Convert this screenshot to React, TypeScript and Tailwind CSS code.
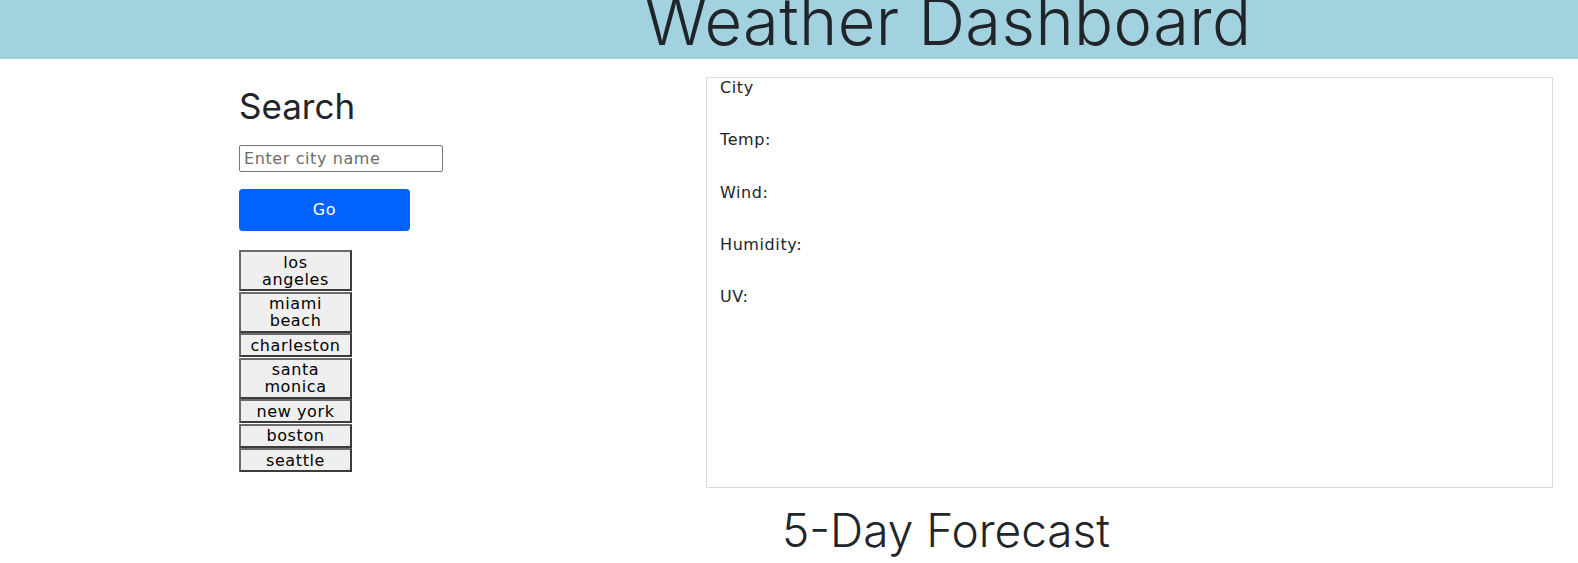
import React from 'react';

const cities = ['los angeles', 'miami beach', 'charleston', 'santa monica', 'new york', 'boston', 'seattle'];
const labels = ['City', 'Temp:', 'Wind:', 'Humidity:', 'UV:'];

export default function App() {
  return (
    <div className="min-h-screen w-full overflow-hidden bg-white text-[#212529] font-['DejaVu_Sans','Noto_Sans',sans-serif]">
      {/* header */}
      <header className="flex h-[59px] justify-center overflow-hidden bg-[#a2d2e0] pl-[318px]">
        <h1 className="-mt-[11px] whitespace-nowrap font-['Inter',sans-serif] text-[65px] font-light leading-none tracking-[0.4px]">
          Weather Dashboard
        </h1>
      </header>

      <main className="flex">
        {/* search column */}
        <section className="flex w-[706px] shrink-0 flex-col items-start pl-[239px] pt-[26px]">
          <h2 className="font-['Inter',sans-serif] text-[35px] font-normal leading-[1.2]">Search</h2>
          <input
            type="text"
            placeholder="Enter city name"
            className="mt-[18px] h-[27px] w-[204px] rounded-[2px] border border-[#767676] px-[4px] text-[16px] tracking-[0.6px] outline-none placeholder:text-[#6d6d6d]"
          />
          <button className="mt-[17px] h-[42px] w-[171px] rounded-[4px] bg-[#0062ff] text-[16px] tracking-[0.6px] text-white">
            Go
          </button>
          <ul className="mt-[19px] flex w-[113px] flex-col">
            {cities.map((c) => (
              <li key={c}>
                <button className="w-full border-2 border-[#3c3c3c] border-l-[#6b6b6b] border-t-[#6b6b6b] bg-[#efefef] px-[8px] py-[1.5px] text-[16px] leading-[17px] tracking-[0.6px] text-black">
                  {c}
                </button>
              </li>
            ))}
          </ul>
        </section>

        {/* current weather */}
        <div className="flex flex-col">
          <section className="mt-[18px] flex h-[411px] w-[847px] flex-col gap-[33.3px] border border-[#dcdcdc] pl-[13px]">
            {labels.map((l) => (
              <p key={l} className="text-[16px] leading-[19px] tracking-[0.6px]">
                {l}
              </p>
            ))}
          </section>
          <h2 className="mt-[15px] pl-[76px] font-['Inter',sans-serif] text-[46px] font-light leading-[1.2]">5-Day Forecast</h2>
        </div>
      </main>
    </div>
  );
}
